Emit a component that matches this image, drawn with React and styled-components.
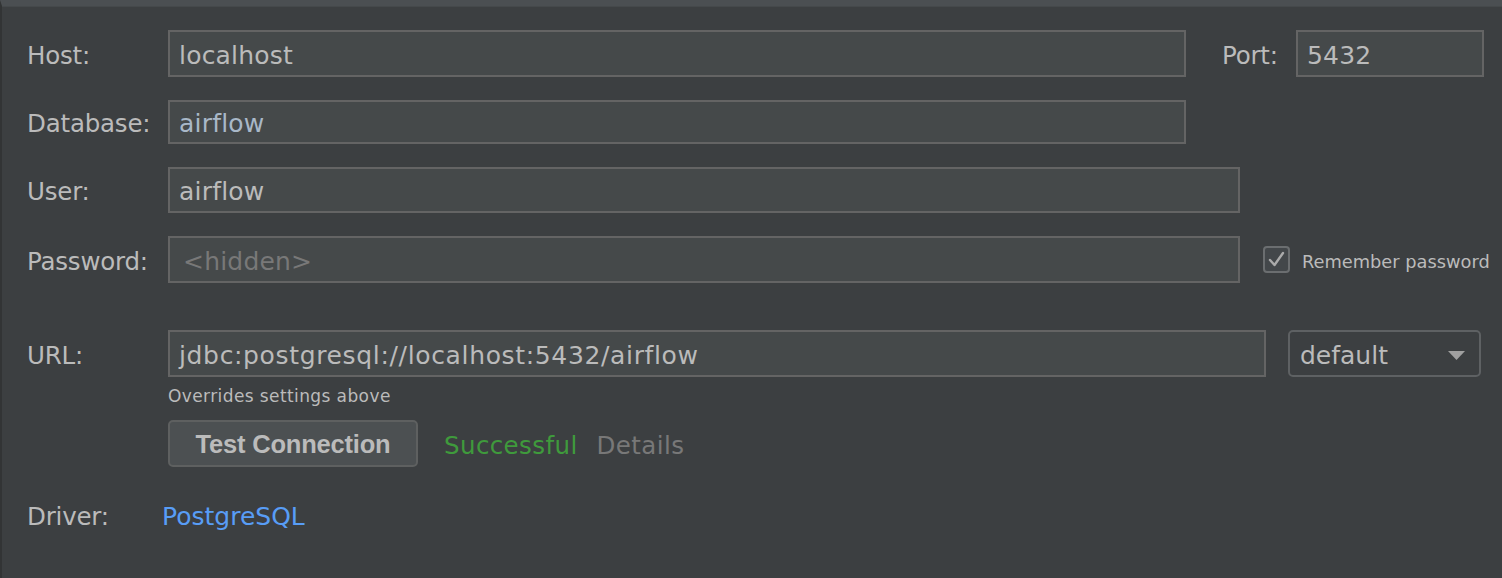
import React from "react";
import styled, { createGlobalStyle } from "styled-components";

const Global = createGlobalStyle`
  html, body { margin: 0; padding: 0; background: #3c3f41; }
  body { font-family: "DejaVu Sans", "Noto Sans", sans-serif; }
`;

const Page = styled.div`
  width: 1502px;
  height: 578px;
  box-sizing: border-box;
  background: #3c3f41;
  border-top: 6px solid #4b4f52;
  border-left: 2px solid #323435;
  box-shadow: inset 0 1px 0 #45494b;
  padding: 24px 0 0 25px;
  overflow: hidden;
`;

const Row = styled.div`
  display: flex;
  align-items: center;
  height: ${(p) => p.h || 47}px;
  margin-top: ${(p) => p.mt || 0}px;
`;

const Label = styled.div`
  width: ${(p) => p.w || 141}px;
  flex: none;
  color: #bbbbbb;
  font-size: 24.5px;
  letter-spacing: -0.2px;
  padding-top: 3px;
  margin-left: ${(p) => p.ml || 0}px;
`;

const Field = styled.div`
  box-sizing: border-box;
  width: ${(p) => p.w}px;
  height: 100%;
  flex: none;
  background: #45494a;
  border: 2px solid #646464;
  display: flex;
  align-items: center;
  padding-left: ${(p) => (p.placeholder ? 13 : 9)}px;
  padding-top: 3px;
  color: ${(p) => (p.tone === "blue" ? "#a9b8c8" : p.tone === "muted" ? "#787878" : "#bbbbbb")};
  font-size: 25px;
  letter-spacing: ${(p) => p.spacing ?? 0.2}px;
  margin-left: ${(p) => p.ml || 0}px;
`;

const Check = styled.div`
  box-sizing: border-box;
  width: 27px;
  height: 27px;
  flex: none;
  border: 2px solid #6b6e70;
  border-radius: 4px;
  background: #43474a;
  margin-left: 23px;
  display: flex;
  align-items: center;
  justify-content: center;
`;

const CheckText = styled.div`
  color: #bbbbbb;
  font-size: 17.8px;
  margin-left: 12px;
  margin-top: 4px;
`;

const Select = styled.div`
  box-sizing: border-box;
  width: 193px;
  height: 100%;
  flex: none;
  margin-left: 22px;
  border: 2px solid #5e6163;
  border-radius: 5px;
  background: #3c3f41;
  display: flex;
  align-items: center;
  justify-content: space-between;
  padding: 3px 14px 0 10px;
  color: #bbbbbb;
  font-size: 25px;
`;

const Hint = styled.div`
  color: #bbbbbb;
  font-size: 17px;
  padding-left: 141px;
  margin-top: 9px;
  height: 20px;
  letter-spacing: 0.4px;
`;

const Button = styled.div`
  box-sizing: border-box;
  width: 250px;
  height: 100%;
  flex: none;
  margin-left: 141px;
  background: #4c5052;
  border: 2px solid #5e6060;
  border-radius: 5px;
  display: flex;
  align-items: center;
  justify-content: center;
  padding-top: 2px;
  color: #bbbbbb;
  font-family: "Liberation Sans", Arial, sans-serif;
  font-weight: bold;
  font-size: 25.5px;
  letter-spacing: -0.2px;
`;

const Status = styled.span`
  color: ${(p) => p.color};
  font-size: 24.5px;
  margin-left: ${(p) => p.ml}px;
  padding-top: 3px;
  letter-spacing: 0.4px;
`;

const Link = styled.span`
  color: #589df6;
  font-size: 25px;
  margin-left: -6px;
  padding-top: 3px;
`;

export default function App() {
  return (
    <>
      <Global />
      <Page>
        <Row>
          <Label>Host:</Label>
          <Field w={1018}>localhost</Field>
          <Label w={74} ml={36}>Port:</Label>
          <Field w={188}>5432</Field>
        </Row>
        <Row mt={23} h={44}>
          <Label>Database:</Label>
          <Field w={1018} tone="blue">airflow</Field>
        </Row>
        <Row mt={23} h={46}>
          <Label>User:</Label>
          <Field w={1072}>airflow</Field>
        </Row>
        <Row mt={23}>
          <Label>Password:</Label>
          <Field w={1072} tone="muted" placeholder="1">&lt;hidden&gt;</Field>
          <Check>
            <svg width="19" height="19" viewBox="0 0 19 19">
              <path d="M3 10 L7.5 15 L16 3" fill="none" stroke="#aaaaaa" strokeWidth="2.4" strokeLinecap="round" strokeLinejoin="round" />
            </svg>
          </Check>
          <CheckText>Remember password</CheckText>
        </Row>
        <Row mt={47}>
          <Label>URL:</Label>
          <Field w={1098} spacing={0.65}>jdbc:postgresql://localhost:5432/airflow</Field>
          <Select>
            <span>default</span>
            <svg width="17" height="9" viewBox="0 0 17 9">
              <path d="M0 0 L17 0 L8.5 9 Z" fill="#a0a0a0" />
            </svg>
          </Select>
        </Row>
        <Hint>Overrides settings above</Hint>
        <Row mt={14}>
          <Button>Test Connection</Button>
          <Status color="#3f9a3c" ml={26}>Successful</Status>
          <Status color="#787878" ml={19}>Details</Status>
        </Row>
        <Row mt={33} h={30}>
          <Label>Driver:</Label>
          <Link>PostgreSQL</Link>
        </Row>
      </Page>
    </>
  );
}
